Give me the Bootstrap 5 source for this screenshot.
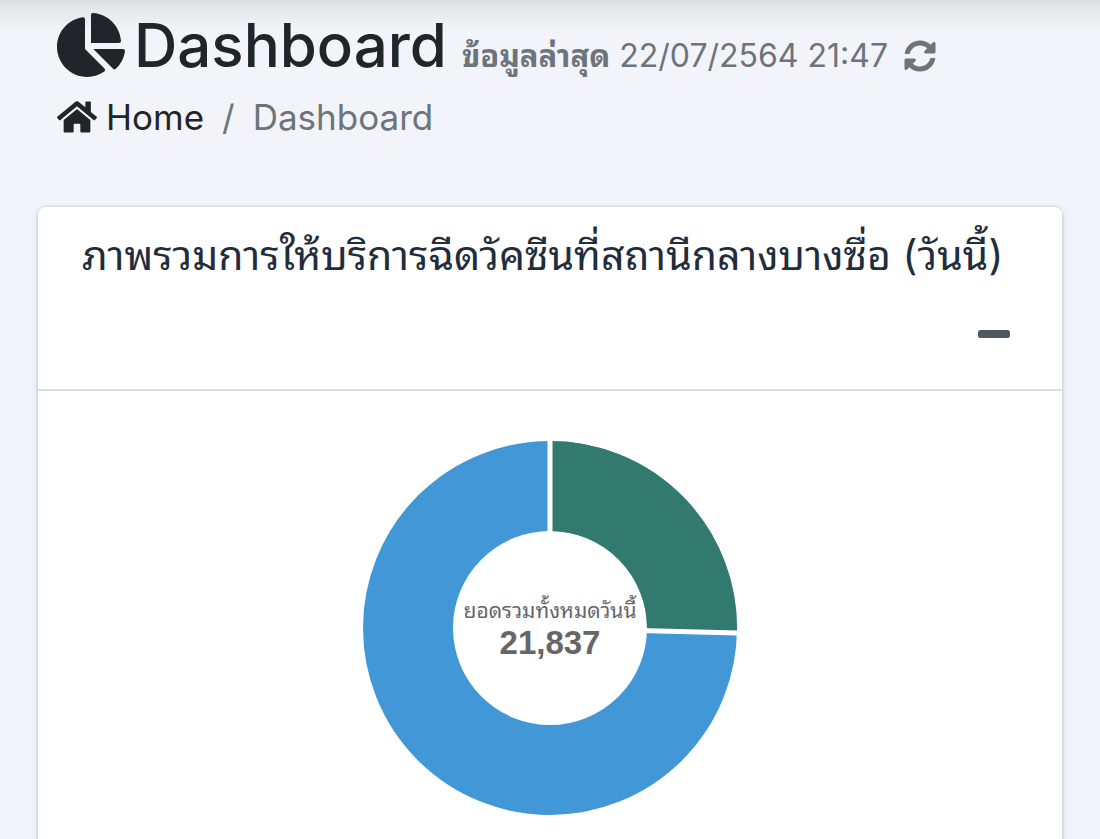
<!DOCTYPE html>
<html lang="th">
<head>
<meta charset="utf-8">
<meta name="viewport" content="width=device-width, initial-scale=1">
<title>Dashboard</title>
<link href="https://cdn.jsdelivr.net/npm/bootstrap@5.3.0/dist/css/bootstrap.min.css" rel="stylesheet">
<style>
  body { background: #f3f4f9; color: #212529; font-family: Inter, "Noto Sans Thai Looped", Loma, Garuda, Laksaman, Waree, "Noto Sans Thai", sans-serif; }
  .top-shade { height: 32px; background: linear-gradient(#dcdde1, #e8e9ed 35%, #f3f4f9); margin-bottom: -32px; }
  .page-head { padding: 5px 57px 0; position: relative; }
  .page-title { font-size: 60px; line-height: 80px; font-weight: 500; gap: 9px; }
  .updated { font-size: 32px; line-height: 40px; color: #6c757d; gap: 16px; margin-left: 15px; }
  .updated b { font-size: 31px; }
  .updated button { color: inherit; line-height: 32px; }
  .breadcrumb { margin: 10px 0 0; font-size: 35px; line-height: 44px; --bs-breadcrumb-item-padding-x: 18px; --bs-breadcrumb-divider-color: #6c757d; --bs-breadcrumb-item-active-color: #6c757d; }
  .breadcrumb a { color: #212529; gap: 9px; }
  .panel { margin: 63px 38px 32px; border: 0; border-radius: 8px; box-shadow: 0 0 3px rgba(0,0,0,.2), 0 3px 8px rgba(0,0,0,.12); }
  .panel .card-header { background: #fff; border-bottom: 2px solid #dedfe0; border-radius: 8px 8px 0 0; padding: 20px 44px; }
  .panel-title { font-size: 41px; line-height: 56px; color: #1f2d3d; }
  .panel .btn { color: #4f5962; padding: 33px 8px 17px; line-height: 36px; }
  .panel .card-body { padding: 50px 44px; }
  .donut-note { font-size: 21px; line-height: 30px; color: #666; }
  .donut-total { font: 700 33px/34px "Liberation Sans", sans-serif; color: #666; }
  svg { display: block; fill: currentColor; }
</style>
</head>
<body>
<div class="top-shade"></div>
<header class="page-head">
  <div class="d-flex align-items-baseline">
    <h1 class="page-title d-flex align-items-baseline mb-0">
      <svg class="align-self-center" width="68" height="64" viewBox="0 0 544 512" aria-hidden="true"><path d="M527.79 288H290.5l158.03 158.03c6.04 6.04 15.98 6.53 22.19.68 38.7-36.46 65.32-85.61 73.13-140.86 1.34-9.46-6.51-17.85-16.06-17.85zm-15.83-64.8C503.72 103.74 408.26 8.28 288.8.04 279.68-.59 272 7.1 272 16.24V240h223.77c9.14 0 16.82-7.68 16.19-16.8zM224 288V50.71c0-9.55-8.39-17.4-17.84-16.06C86.99 51.49-4.1 155.6.14 280.37 4.5 408.51 114.83 513.59 243.03 511.98c50.4-.63 96.97-16.87 135.26-44.03 7.9-5.6 8.42-17.23 1.57-24.08L224 288z"/></svg>
      <span>Dashboard</span>
    </h1>
    <div class="updated d-flex align-items-baseline">
      <span class="text-nowrap"><b>ข้อมูลล่าสุด</b> 22/07/2564 21:47</span>
      <button type="button" class="btn p-0 border-0 align-self-center" aria-label="Refresh">
        <svg width="32" height="32" viewBox="0 0 512 512"><path d="M370.72 133.28C339.458 104.008 298.888 87.962 255.848 88c-77.458.068-144.328 53.178-162.791 126.85-1.344 5.363-6.122 9.15-11.651 9.15H24.103c-7.498 0-13.194-6.807-11.807-14.176C33.933 94.924 134.813 8 256 8c66.448 0 126.791 26.136 171.315 68.685L463.03 40.97C478.149 25.851 504 36.559 504 57.941V192c0 13.255-10.745 24-24 24H345.941c-21.382 0-32.09-25.851-16.971-40.971l41.75-41.749zM32 296h134.059c21.382 0 32.09 25.851 16.971 40.971l-41.75 41.75c31.262 29.273 71.835 45.319 114.876 45.28 77.418-.07 144.315-53.144 162.787-126.849 1.344-5.363 6.122-9.152 11.651-9.152h57.304c7.498 0 13.194 6.807 11.807 14.176C478.067 417.076 377.187 504 256 504c-66.448 0-126.791-26.136-171.315-68.685L48.97 471.03C33.851 486.149 8 475.441 8 454.059V320c0-13.255 10.745-24 24-24z"/></svg>
      </button>
    </div>
  </div>
  <nav aria-label="breadcrumb">
    <ol class="breadcrumb">
      <li class="breadcrumb-item"><a href="#" class="d-inline-flex align-items-center text-decoration-none">
        <svg width="40" height="36" viewBox="0 0 576 512" aria-hidden="true"><path d="M280.37 148.26L96 300.11V464a16 16 0 0 0 16 16l112.06-.29a16 16 0 0 0 15.92-16V368a16 16 0 0 1 16-16h64a16 16 0 0 1 16 16v95.64a16 16 0 0 0 16 16.05L464 480a16 16 0 0 0 16-16V300L295.67 148.26a12.19 12.19 0 0 0-15.3 0zM571.6 251.47L488 182.56V44.05a12 12 0 0 0-12-12h-56a12 12 0 0 0-12 12v72.61L318.47 43a48 48 0 0 0-61 0L4.34 251.47a12 12 0 0 0-1.6 16.9l25.5 31A12 12 0 0 0 45.15 301l235.22-193.74a12.19 12.19 0 0 1 15.3 0L530.9 301a12 12 0 0 0 16.9-1.6l25.5-31a12 12 0 0 0-1.7-16.93z"/></svg>
        <span>Home</span></a></li>
      <li class="breadcrumb-item active" aria-current="page">Dashboard</li>
    </ol>
  </nav>
</header>
<main>
  <section class="card panel">
    <div class="card-header">
      <h2 class="panel-title fw-normal mb-0">ภาพรวมการให้บริการฉีดวัคซีนที่สถานีกลางบางซื่อ (วันนี้)</h2>
      <div class="d-flex justify-content-end">
        <button type="button" class="btn border-0" aria-label="Collapse">
          <svg width="32" height="36" viewBox="0 0 32 36"><rect y="14" width="32" height="8" rx="2.5"/></svg>
        </button>
      </div>
    </div>
    <div class="card-body d-flex justify-content-center">
      <div class="position-relative">
        <svg width="374" height="374" viewBox="-187 -187 374 374" role="img" aria-label="Donut chart">
          <circle r="142" fill="none" stroke="#4297d7" stroke-width="90"/>
          <path d="M0-142A142 142 0 0 1 141.95 3.7" fill="none" stroke="#337a6e" stroke-width="90"/>
          <path d="M0-90V-187M90 2.4L187 4.9" stroke="#fff" stroke-width="5"/>
        </svg>
        <div class="position-absolute top-50 start-50 translate-middle text-center text-nowrap">
          <div class="donut-note">ยอดรวมทั้งหมดวันนี้</div>
          <div class="donut-total">21,837</div>
        </div>
      </div>
    </div>
  </section>
</main>
<script src="https://cdn.jsdelivr.net/npm/bootstrap@5.3.0/dist/js/bootstrap.bundle.min.js"></script>
</body>
</html>
